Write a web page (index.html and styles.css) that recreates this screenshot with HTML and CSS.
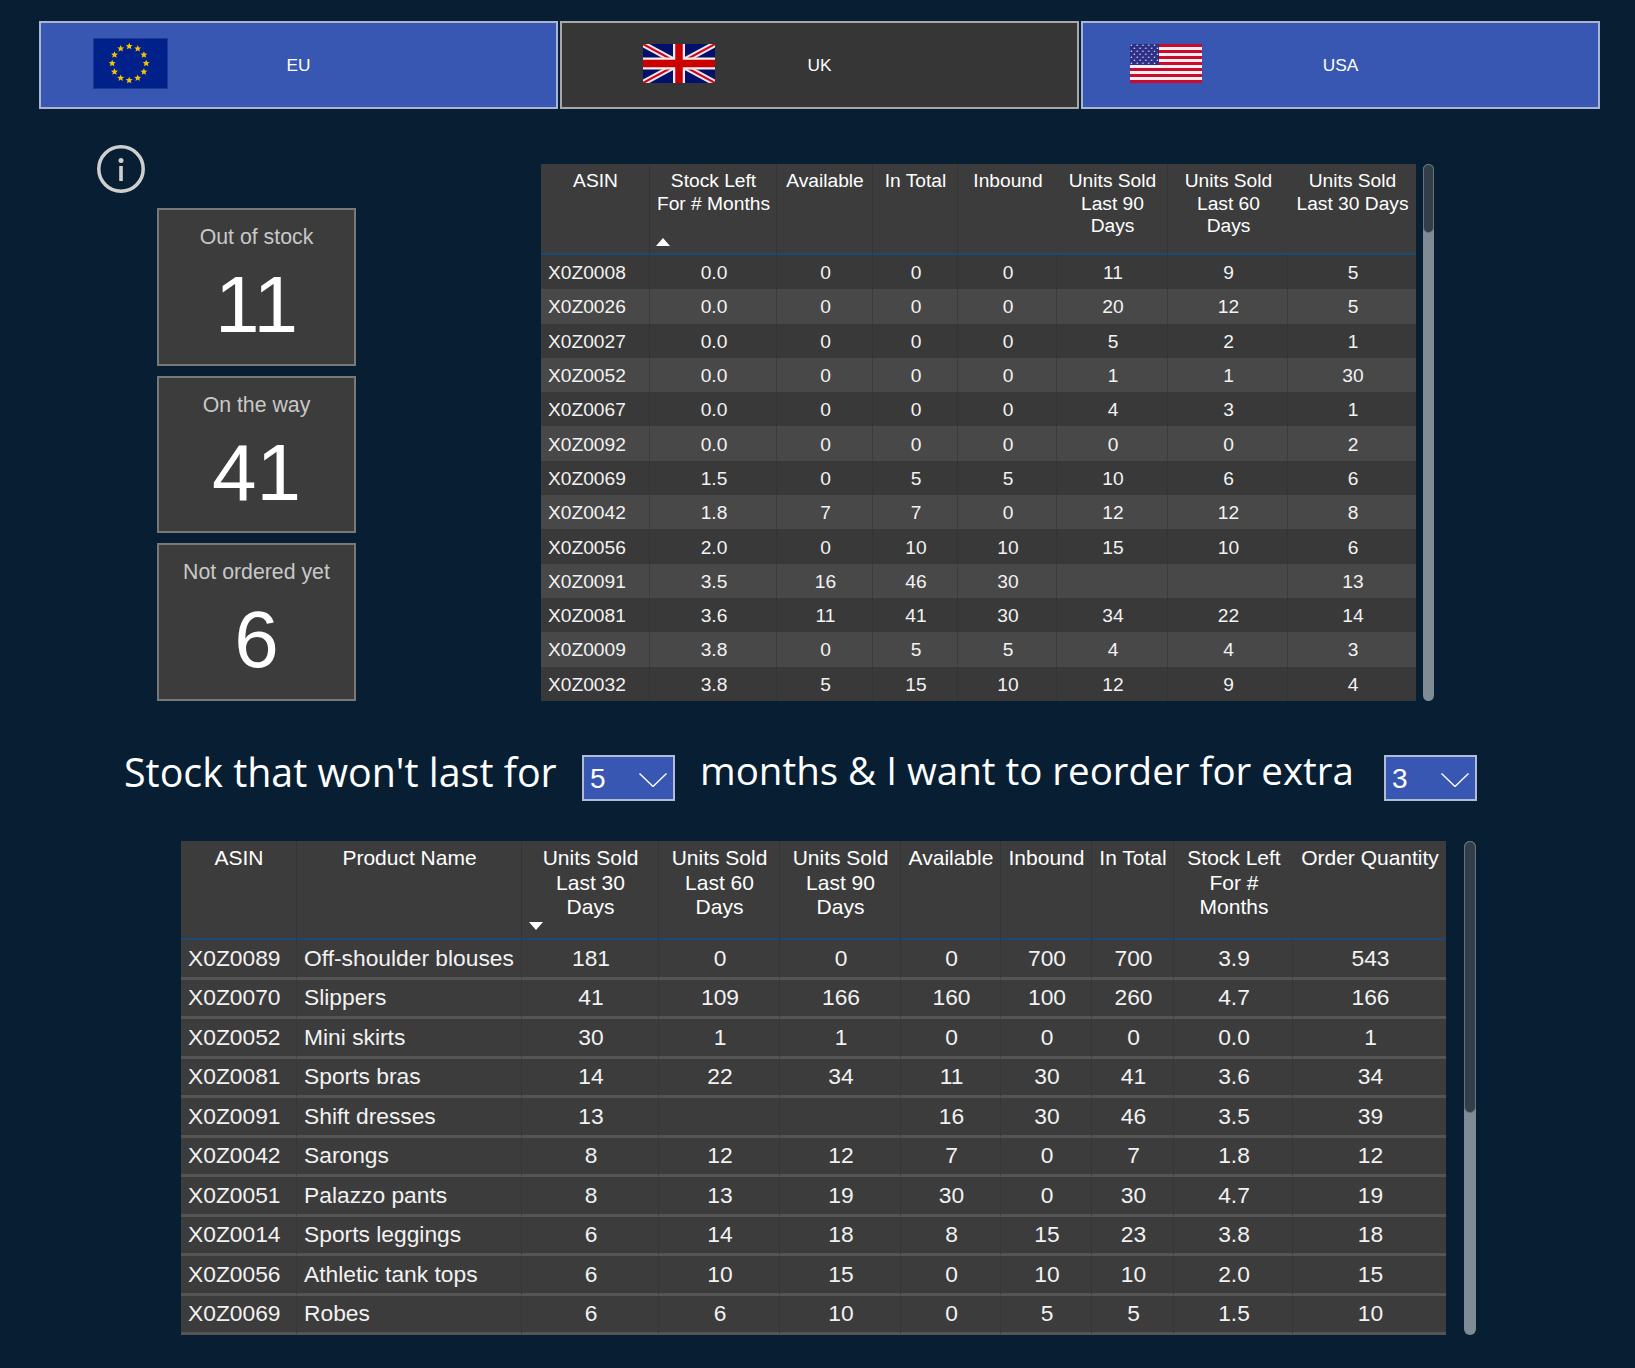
FILE: index.html
```html
<!DOCTYPE html>
<html lang="en">
<head>
<meta charset="utf-8">
<title>Stock dashboard</title>
<link rel="stylesheet" href="styles.css">
</head>
<body>
<svg class="defs" width="0" height="0" aria-hidden="true">
  <defs>
    <polygon id="star" points="0,-3.6 1,-1.2 3.5,-1.1 1.6,0.5 2.2,3 0,1.6 -2.2,3 -1.6,0.5 -3.5,-1.1 -1,-1.2"/>
  </defs>
</svg>

<nav class="tabs">
  <div class="tab tab-on">
    <svg class="flag-eu" viewBox="0 0 75 51">
      <rect x=".5" y=".5" width="74" height="50" fill="#00208a" stroke="#1c3a94"/>
      <g fill="#f5c400">
        <use href="#star" x="36.2" y="8.3"/><use href="#star" x="44.7" y="10.6"/><use href="#star" x="50.9" y="16.8"/>
        <use href="#star" x="53.2" y="25.3"/><use href="#star" x="50.9" y="33.8"/><use href="#star" x="44.7" y="40"/>
        <use href="#star" x="36.2" y="42.3"/><use href="#star" x="27.7" y="40"/><use href="#star" x="21.5" y="33.8"/>
        <use href="#star" x="19.2" y="25.3"/><use href="#star" x="21.5" y="16.8"/><use href="#star" x="27.7" y="10.6"/>
      </g>
    </svg>
    <span class="tab-label">EU</span>
  </div>
  <div class="tab tab-off">
    <svg class="flag-uk" viewBox="0 0 72 39" preserveAspectRatio="none">
      <rect width="72" height="39" fill="#00106b"/>
      <path d="M0 0L72 39M72 0L0 39" stroke="#f0e6e6" stroke-width="6"/>
      <path d="M0 0L72 39M72 0L0 39" stroke="#d0021b" stroke-width="2"/>
      <path d="M36 0V39M0 19.5H72" stroke="#f4ecec" stroke-width="12"/>
      <path d="M36 0V39M0 19.5H72" stroke="#cc0000" stroke-width="7.5"/>
    </svg>
    <span class="tab-label">UK</span>
  </div>
  <div class="tab tab-on">
    <svg class="flag-us" viewBox="0 0 72 39" preserveAspectRatio="none">
      <defs>
        <pattern id="usstars" width="5.8" height="6" patternUnits="userSpaceOnUse">
          <circle cx="1.4" cy="1.2" r=".8" fill="#e6e6f2"/>
          <circle cx="4.3" cy="4.2" r=".8" fill="#e6e6f2"/>
        </pattern>
      </defs>
      <rect width="72" height="39" fill="#f4f0f2"/>
      <path d="M0 1.5H72M0 7.5H72M0 13.5H72M0 19.5H72M0 25.5H72M0 31.5H72M0 37.5H72" stroke="#cc0a2e" stroke-width="3"/>
      <rect width="29" height="21" fill="#2c2f86"/>
      <rect width="29" height="21" fill="url(#usstars)"/>
    </svg>
    <span class="tab-label">USA</span>
  </div>
</nav>

<section class="upper">
  <aside class="side">
    <svg class="info" viewBox="0 0 48 48">
      <circle cx="24" cy="24" r="22.2" fill="none" stroke="#cfcfcf" stroke-width="3.5"/>
      <circle cx="24" cy="15.5" r="2.5" fill="#cfcfcf"/>
      <rect x="22.2" y="21" width="3.6" height="15" fill="#cfcfcf"/>
    </svg>
    <div class="cards">
      <div class="card"><div class="card-title">Out of stock</div><div class="card-value">11</div></div>
      <div class="card"><div class="card-title">On the way</div><div class="card-value">41</div></div>
      <div class="card"><div class="card-title">Not ordered yet</div><div class="card-value">6</div></div>
    </div>
  </aside>

  <div class="table-wrap table-wrap-a">
    <table class="grid grid-a">
      <colgroup>
        <col class="a1"><col class="a2"><col class="a3"><col class="a4"><col class="a5"><col class="a6"><col class="a7"><col class="a8">
      </colgroup>
      <thead>
        <tr>
          <th class="sep">ASIN</th>
          <th class="sep sortable">Stock Left<br>For # Months<span class="tri-up"></span></th>
          <th class="sep">Available</th>
          <th class="sep">In Total</th>
          <th>Inbound</th>
          <th class="sep">Units Sold<br>Last 90<br>Days</th>
          <th>Units Sold<br>Last 60<br>Days</th>
          <th>Units Sold<br>Last 30 Days</th>
        </tr>
      </thead>
      <tbody>
        <tr><td>X0Z0008</td><td>0.0</td><td>0</td><td>0</td><td>0</td><td>11</td><td>9</td><td>5</td></tr>
        <tr><td>X0Z0026</td><td>0.0</td><td>0</td><td>0</td><td>0</td><td>20</td><td>12</td><td>5</td></tr>
        <tr><td>X0Z0027</td><td>0.0</td><td>0</td><td>0</td><td>0</td><td>5</td><td>2</td><td>1</td></tr>
        <tr><td>X0Z0052</td><td>0.0</td><td>0</td><td>0</td><td>0</td><td>1</td><td>1</td><td>30</td></tr>
        <tr><td>X0Z0067</td><td>0.0</td><td>0</td><td>0</td><td>0</td><td>4</td><td>3</td><td>1</td></tr>
        <tr><td>X0Z0092</td><td>0.0</td><td>0</td><td>0</td><td>0</td><td>0</td><td>0</td><td>2</td></tr>
        <tr><td>X0Z0069</td><td>1.5</td><td>0</td><td>5</td><td>5</td><td>10</td><td>6</td><td>6</td></tr>
        <tr><td>X0Z0042</td><td>1.8</td><td>7</td><td>7</td><td>0</td><td>12</td><td>12</td><td>8</td></tr>
        <tr><td>X0Z0056</td><td>2.0</td><td>0</td><td>10</td><td>10</td><td>15</td><td>10</td><td>6</td></tr>
        <tr><td>X0Z0091</td><td>3.5</td><td>16</td><td>46</td><td>30</td><td></td><td></td><td>13</td></tr>
        <tr><td>X0Z0081</td><td>3.6</td><td>11</td><td>41</td><td>30</td><td>34</td><td>22</td><td>14</td></tr>
        <tr><td>X0Z0009</td><td>3.8</td><td>0</td><td>5</td><td>5</td><td>4</td><td>4</td><td>3</td></tr>
        <tr><td>X0Z0032</td><td>3.8</td><td>5</td><td>15</td><td>10</td><td>12</td><td>9</td><td>4</td></tr>
      </tbody>
    </table>
    <div class="scroll scroll-a"><div class="thumb thumb-a"></div></div>
  </div>
</section>

<section class="filter">
  <span class="phrase phrase-one">Stock that won't last for</span>
  <div class="pick pick-one"><span>5</span><svg class="chev" viewBox="0 0 28 14"><path d="M.5 .5L14 13.5L27.5 .5" fill="none" stroke="#fff" stroke-width="1.4"/></svg></div>
  <span class="phrase phrase-two">months &amp; I want to reorder for extra</span>
  <div class="pick pick-two"><span>3</span><svg class="chev" viewBox="0 0 28 14"><path d="M.5 .5L14 13.5L27.5 .5" fill="none" stroke="#fff" stroke-width="1.4"/></svg></div>
</section>

<section class="lower">
  <div class="table-wrap table-wrap-b">
    <table class="grid grid-b">
      <colgroup>
        <col class="b1"><col class="b2"><col class="b3"><col class="b4"><col class="b5"><col class="b6"><col class="b7"><col class="b8"><col class="b9"><col class="b10">
      </colgroup>
      <thead>
        <tr>
          <th class="sep">ASIN</th>
          <th class="sep">Product Name</th>
          <th class="sep sortable">Units Sold<br>Last 30<br>Days<span class="tri-down"></span></th>
          <th class="sep">Units Sold<br>Last 60<br>Days</th>
          <th class="sep">Units Sold<br>Last 90<br>Days</th>
          <th class="sep">Available</th>
          <th class="sep">Inbound</th>
          <th class="sep">In Total</th>
          <th>Stock Left<br>For #<br>Months</th>
          <th>Order Quantity</th>
        </tr>
      </thead>
      <tbody>
        <tr><td>X0Z0089</td><td class="name">Off-shoulder blouses</td><td>181</td><td>0</td><td>0</td><td>0</td><td>700</td><td>700</td><td>3.9</td><td>543</td></tr>
        <tr><td>X0Z0070</td><td class="name">Slippers</td><td>41</td><td>109</td><td>166</td><td>160</td><td>100</td><td>260</td><td>4.7</td><td>166</td></tr>
        <tr><td>X0Z0052</td><td class="name">Mini skirts</td><td>30</td><td>1</td><td>1</td><td>0</td><td>0</td><td>0</td><td>0.0</td><td>1</td></tr>
        <tr><td>X0Z0081</td><td class="name">Sports bras</td><td>14</td><td>22</td><td>34</td><td>11</td><td>30</td><td>41</td><td>3.6</td><td>34</td></tr>
        <tr><td>X0Z0091</td><td class="name">Shift dresses</td><td>13</td><td></td><td></td><td>16</td><td>30</td><td>46</td><td>3.5</td><td>39</td></tr>
        <tr><td>X0Z0042</td><td class="name">Sarongs</td><td>8</td><td>12</td><td>12</td><td>7</td><td>0</td><td>7</td><td>1.8</td><td>12</td></tr>
        <tr><td>X0Z0051</td><td class="name">Palazzo pants</td><td>8</td><td>13</td><td>19</td><td>30</td><td>0</td><td>30</td><td>4.7</td><td>19</td></tr>
        <tr><td>X0Z0014</td><td class="name">Sports leggings</td><td>6</td><td>14</td><td>18</td><td>8</td><td>15</td><td>23</td><td>3.8</td><td>18</td></tr>
        <tr><td>X0Z0056</td><td class="name">Athletic tank tops</td><td>6</td><td>10</td><td>15</td><td>0</td><td>10</td><td>10</td><td>2.0</td><td>15</td></tr>
        <tr><td>X0Z0069</td><td class="name">Robes</td><td>6</td><td>6</td><td>10</td><td>0</td><td>5</td><td>5</td><td>1.5</td><td>10</td></tr>
      </tbody>
    </table>
    <div class="scroll scroll-b"><div class="thumb thumb-b"></div></div>
  </div>
</section>
</body>
</html>
```

FILE: styles.css
```css
* { box-sizing: border-box; }
html, body { margin: 0; padding: 0; }
body {
  width: 1635px;
  height: 1368px;
  overflow: hidden;
  background: #071e33;
  color: #fff;
  font-family: "Liberation Sans", Arial, sans-serif;
}
.defs { position: absolute; }

/* Region tabs */
.tabs {
  display: flex;
  gap: 2px;
  margin: 21px 35px 0 39px;
  height: 88px;
}
.tab {
  position: relative;
  flex: 1 1 0;
  display: flex;
  align-items: center;
  justify-content: center;
  border: 2px solid;
  font-size: 17.3px;
}
.tab-on { background: #3757b3; border-color: #a9b5d2; }
.tab-off { background: #363636; border-color: #a8a8a8; }
.flag-eu { position: absolute; left: 52px; top: 15px; width: 75px; height: 51px; }
.flag-uk { position: absolute; left: 81px; top: 21px; width: 72px; height: 39px; }
.flag-us { position: absolute; left: 46.5px; top: 21px; width: 72px; height: 39px; }

/* Upper band */
.upper {
  display: flex;
  margin-top: 37px;
  height: 555px;
}
.side {
  width: 541px;
  flex: none;
  padding: 0 0 0 97px;
}
.info { display: block; width: 48px; height: 48px; margin-top: -1px; }
.cards {
  display: flex;
  flex-direction: column;
  gap: 10px;
  width: 199px;
  margin: 15px 0 0 60px;
}
.card {
  height: 157.5px;
  background: #3c3c3c;
  border: 2px solid #787878;
  text-align: center;
}
.card-title {
  margin-top: 15px;
  font-size: 21.3px;
  line-height: 24px;
  color: #c8c8c8;
}
.card-value {
  margin-top: 10px;
  font-size: 80px;
  line-height: 92px;
}

/* Tables */
.table-wrap { display: flex; align-items: stretch; }
.table-wrap-a { gap: 7px; height: 537px; margin-top: 18px; }
.table-wrap-b { gap: 18px; height: 494px; }
.grid {
  border-collapse: separate;
  border-spacing: 0;
  table-layout: fixed;
  height: 100%;
}
.grid th {
  position: relative;
  background: #3c3c3c;
  font-weight: normal;
  text-align: center;
  vertical-align: top;
  border-bottom: 2px solid #1d4a75;
}
.grid th.sep { border-right: 1px solid #333539; }
.grid td {
  text-align: center;
  padding: 0 2px 0 4px;
  white-space: nowrap;
  border-right: 1px solid rgba(40, 48, 56, .45);
  color: #f2f2f2;
}
.grid td:first-child { text-align: left; }
.grid td:last-child { border-right: none; }

.grid-a { width: 875px; font-size: 19.2px; }
.grid-a thead tr { height: 91px; }
.grid-a th { padding: 6px 2px 0 3px; line-height: 22.7px; }
.grid-a tbody tr { height: 34.3px; }
.grid-a td { padding-top: 2px; }
.grid-a tbody tr:nth-child(odd) td { background: #393939; }
.grid-a tbody tr:nth-child(even) td { background: #484848; }
.grid-a td:first-child { padding-left: 7px; }

.a1 { width: 109px; } .a2 { width: 127px; } .a3 { width: 96px; } .a4 { width: 85px; }
.a5 { width: 99px; } .a6 { width: 111px; } .a7 { width: 120px; } .a8 { width: 128px; }

.grid-b { width: 1265px; font-size: 22.8px; }
.grid-b thead tr { height: 99px; }
.grid-b th { padding: 5px 2px 0 3px; font-size: 21px; line-height: 24.5px; }
.grid-b tbody tr { height: 39.5px; }
.grid-b td { background: #3c3c3c; border-bottom: 3px solid #555; border-right-color: rgba(40, 48, 56, .35); }
.grid-b td:first-child { padding-left: 7px; }
.grid-b td.name { text-align: left; padding-left: 7px; }

.b1 { width: 116px; } .b2 { width: 225px; } .b3 { width: 137px; } .b4 { width: 121px; }
.b5 { width: 121px; } .b6 { width: 100px; } .b7 { width: 91px; } .b8 { width: 82px; }
.b9 { width: 119px; } .b10 { width: 153px; }

.tri-up, .tri-down {
  position: absolute;
  width: 0;
  height: 0;
  border-left: 7.5px solid transparent;
  border-right: 7.5px solid transparent;
}
.tri-up { left: 6px; bottom: 7px; border-bottom: 8px solid #fff; }
.tri-down { left: 7px; bottom: 8px; border-top: 8px solid #fff; }

.scroll {
  position: relative;
  flex: none;
  background: #7f8c96;
  border-radius: 6px;
}
.scroll-a { width: 11px; }
.scroll-b { width: 12px; }
.thumb {
  background: #323e4a;
  border: 1px solid #66727c;
  border-radius: 6px;
}
.thumb-a { height: 69px; }
.thumb-b { height: 272px; }

/* Filter sentence */
.filter {
  display: flex;
  align-items: flex-start;
  height: 140px;
  margin: 0 0 0 124px;
  padding-top: 54px;
}
.phrase {
  font-family: "Open Sans", "Noto Sans", sans-serif;
  line-height: 46px;
  white-space: nowrap;
}
.phrase-one { width: 458px; margin-top: -6px; font-size: 39.4px; }
.phrase-two { width: 684px; margin: -8px 0 0 25px; font-size: 38.5px; }
.pick {
  flex: none;
  height: 46px;
  width: 93px;
  display: flex;
  align-items: center;
  justify-content: space-between;
  padding: 2px 6px 0 6px;
  background: #3757b3;
  border: 2px solid #b0bcd8;
  font-size: 28px;
}
.chev { width: 28px; height: 14px; margin-top: 2px; }

/* Lower band */
.lower { margin: 0 0 0 181px; }
```
